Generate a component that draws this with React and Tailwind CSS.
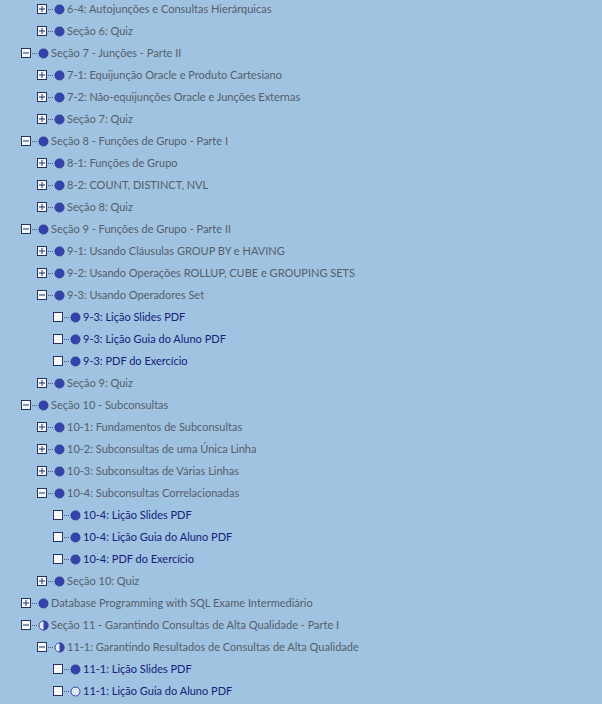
const rows = [
  { lvl: 1, box: "plus", dot: "full", text: "6-4: Autojunções e Consultas Hierárquicas" },
  { lvl: 1, box: "plus", dot: "full", text: "Seção 6: Quiz" },
  { lvl: 0, box: "minus", dot: "full", text: "Seção 7 - Junções - Parte II" },
  { lvl: 1, box: "plus", dot: "full", text: "7-1: Equijunção Oracle e Produto Cartesiano" },
  { lvl: 1, box: "plus", dot: "full", text: "7-2: Não-equijunções Oracle e Junções Externas" },
  { lvl: 1, box: "plus", dot: "full", text: "Seção 7: Quiz" },
  { lvl: 0, box: "minus", dot: "full", text: "Seção 8 - Funções de Grupo - Parte I" },
  { lvl: 1, box: "plus", dot: "full", text: "8-1: Funções de Grupo" },
  { lvl: 1, box: "plus", dot: "full", text: "8-2: COUNT, DISTINCT, NVL" },
  { lvl: 1, box: "plus", dot: "full", text: "Seção 8: Quiz" },
  { lvl: 0, box: "minus", dot: "full", text: "Seção 9 - Funções de Grupo - Parte II" },
  { lvl: 1, box: "plus", dot: "full", text: "9-1: Usando Cláusulas GROUP BY e HAVING" },
  { lvl: 1, box: "plus", dot: "full", text: "9-2: Usando Operações ROLLUP, CUBE e GROUPING SETS" },
  { lvl: 1, box: "minus", dot: "full", text: "9-3: Usando Operadores Set" },
  { lvl: 2, box: "leaf", dot: "full", text: "9-3: Lição Slides PDF" },
  { lvl: 2, box: "leaf", dot: "full", text: "9-3: Lição Guia do Aluno PDF" },
  { lvl: 2, box: "leaf", dot: "full", text: "9-3: PDF do Exercício" },
  { lvl: 1, box: "plus", dot: "full", text: "Seção 9: Quiz" },
  { lvl: 0, box: "minus", dot: "full", text: "Seção 10 - Subconsultas" },
  { lvl: 1, box: "plus", dot: "full", text: "10-1: Fundamentos de Subconsultas" },
  { lvl: 1, box: "plus", dot: "full", text: "10-2: Subconsultas de uma Única Linha" },
  { lvl: 1, box: "plus", dot: "full", text: "10-3: Subconsultas de Várias Linhas" },
  { lvl: 1, box: "minus", dot: "full", text: "10-4: Subconsultas Correlacionadas" },
  { lvl: 2, box: "leaf", dot: "full", text: "10-4: Lição Slides PDF" },
  { lvl: 2, box: "leaf", dot: "full", text: "10-4: Lição Guia do Aluno PDF" },
  { lvl: 2, box: "leaf", dot: "full", text: "10-4: PDF do Exercício" },
  { lvl: 1, box: "plus", dot: "full", text: "Seção 10: Quiz" },
  { lvl: 0, box: "plus", dot: "full", text: "Database Programming with SQL Exame Intermediário" },
  { lvl: 0, box: "minus", dot: "half", text: "Seção 11 - Garantindo Consultas de Alta Qualidade - Parte I" },
  { lvl: 1, box: "minus", dot: "half", text: "11-1: Garantindo Resultados de Consultas de Alta Qualidade" },
  { lvl: 2, box: "leaf", dot: "full", text: "11-1: Lição Slides PDF" },
  { lvl: 2, box: "leaf", dot: "empty", text: "11-1: Lição Guia do Aluno PDF" },
];

const indent = ["pl-[21px]", "pl-[37px]", "pl-[53px]"];

const Toggle = ({ kind }) => (
  <svg width="10" height="10" viewBox="0 0 10 10" className="shrink-0">
    <rect x="0.5" y="0.5" width="9" height="9" fill="#f4f7fb" stroke="#2a3560" />
    {kind !== "leaf" && <rect x="2" y="4.5" width="6" height="1" fill="#2a3560" />}
    {kind === "plus" && <rect x="4.5" y="2" width="1" height="6" fill="#2a3560" />}
  </svg>
);

const Dot = ({ kind }) => (
  <svg width="11" height="11" viewBox="0 0 11 11" className="shrink-0">
    {kind === "full" && <circle cx="5.5" cy="5.5" r="5" fill="#3444a6" />}
    {kind === "half" && (
      <>
        <circle cx="5.5" cy="5.5" r="4.5" fill="#e6eef8" stroke="#3444a6" />
        <path d="M5.5 0.5 A5 5 0 0 1 5.5 10.5 Z" fill="#3444a6" />
      </>
    )}
    {kind === "empty" && <circle cx="5.5" cy="5.5" r="4.5" fill="#dde8f4" stroke="#3444a6" />}
  </svg>
);

const App = () => {
  return (
    <div className="w-[602px] h-[704px] overflow-hidden bg-[#9fc3e0] font-['Lato','Liberation_Sans',sans-serif]">
      <div className="mt-[-2px]">
        {rows.map((row, i) => (
          <div key={i} className={`flex items-center h-[22px] ${indent[row.lvl]}`}>
            <Toggle kind={row.box} />
            <div className="flex items-center justify-center gap-[1px] w-[7px]">
              <span className="w-[1px] h-[1px] bg-[#4a5a80]" />
              <span className="w-[1px] h-[1px] bg-[#4a5a80]" />
              <span className="w-[1px] h-[1px] bg-[#4a5a80]" />
            </div>
            <Dot kind={row.dot} />
            <span
              className={`ml-[2px] text-[11px] whitespace-nowrap ${
                row.box === "leaf" ? "text-[#16207a]" : "text-[#575d6b]"
              }`}
            >
              {row.text}
            </span>
          </div>
        ))}
      </div>
    </div>
  );
};

export default App;
